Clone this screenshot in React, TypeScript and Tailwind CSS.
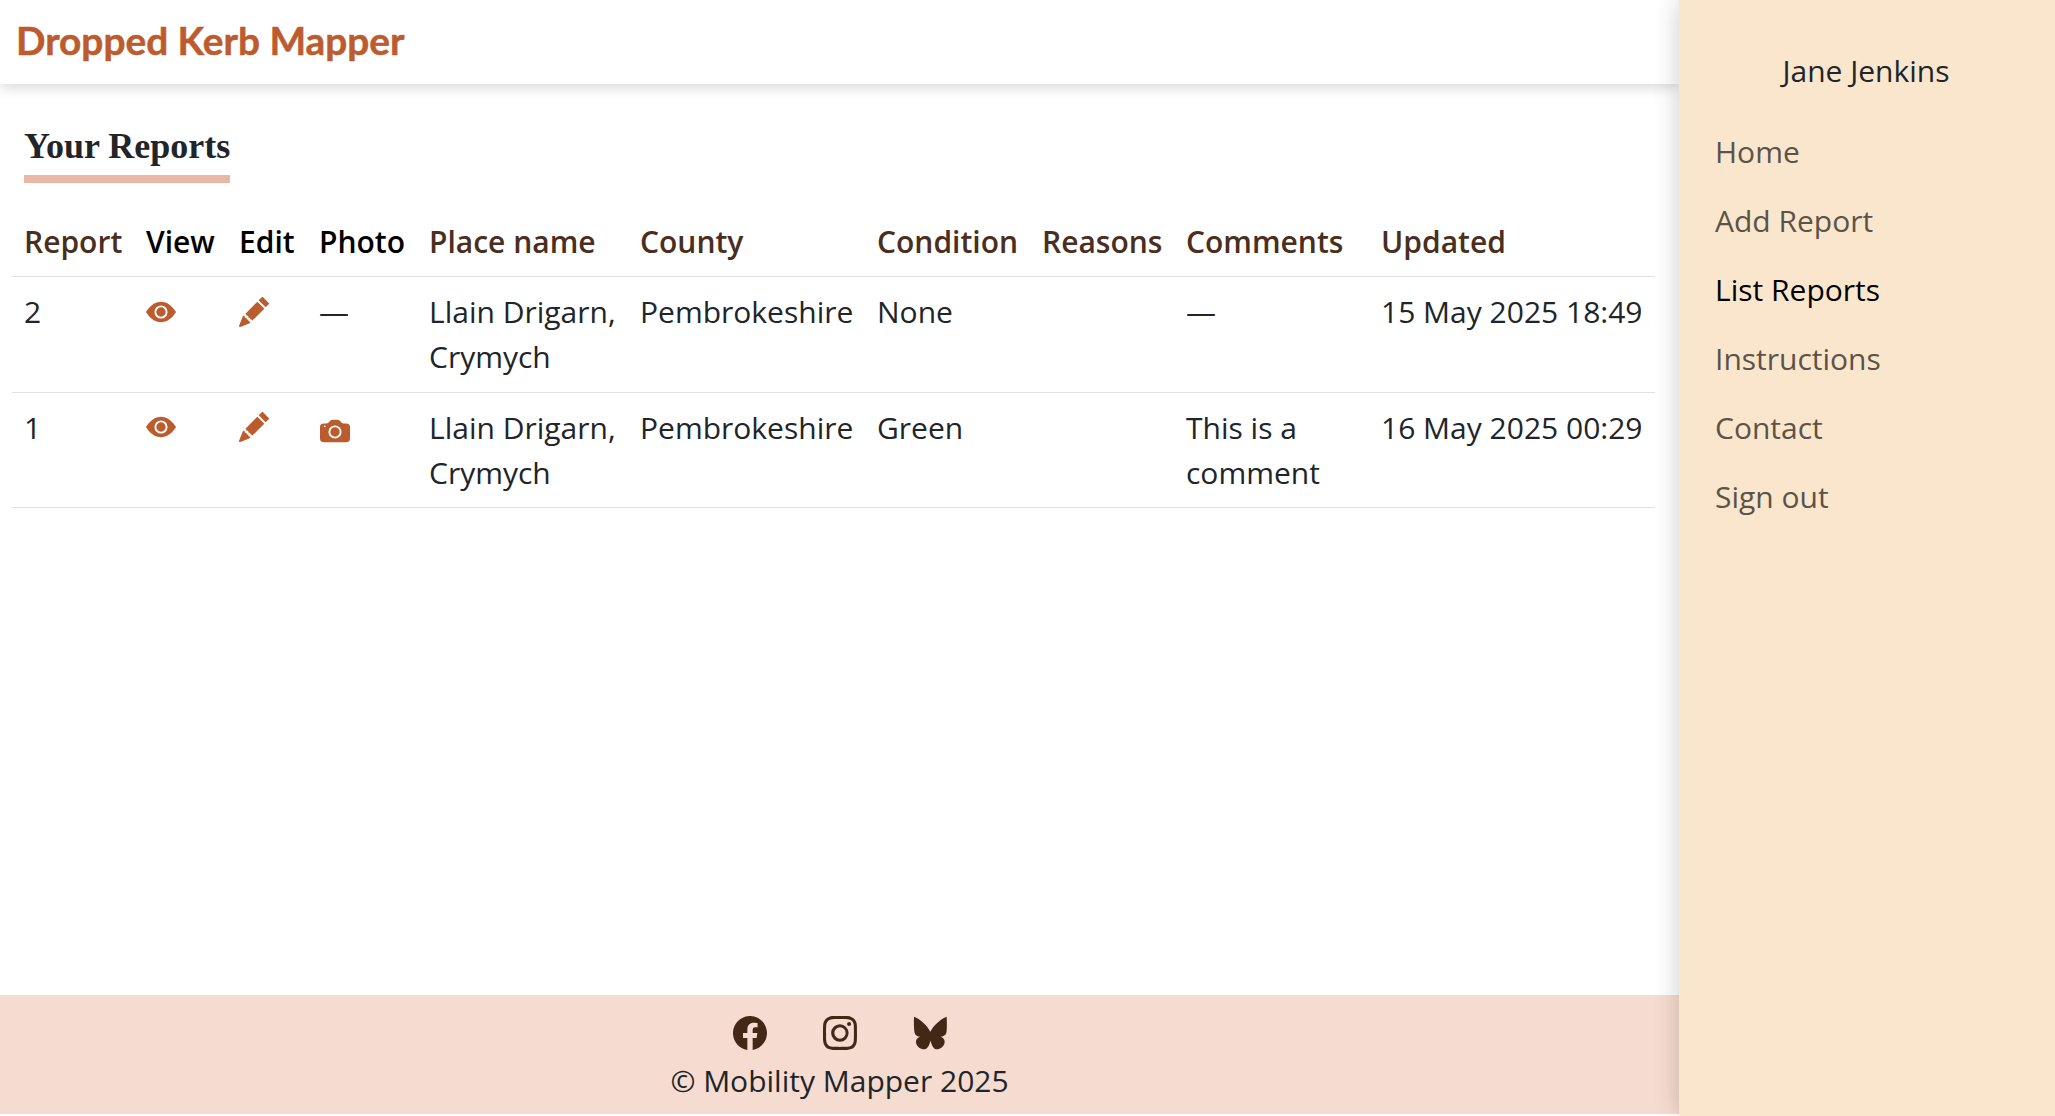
import { BsEyeFill, BsPencilFill, BsCameraFill, BsFacebook, BsInstagram } from "react-icons/bs";

const th = "px-3 pt-[13px] pb-[12px] text-left font-semibold text-[#4a2e20] border-b border-[#dee2e6] whitespace-nowrap";
const thb = "px-3 pt-[13px] pb-[12px] text-left font-semibold text-black border-b border-[#dee2e6] whitespace-nowrap";
const td = "px-3 pt-[12px] pb-[13px] align-top border-b border-[#dee2e6] text-[#212529]";
const td2 = "px-3 pt-[12px] pb-[12px] align-top border-b border-[#dee2e6] text-[#212529]";

function Eye({ top }: { top: string }) {
  return <BsEyeFill className={"text-[#bc5c2e] w-[30px] h-[30px] " + top} />;
}
function Pencil({ top }: { top: string }) {
  return <BsPencilFill className={"text-[#bc5c2e] w-[30px] h-[30px] " + top} />;
}
function Butterfly() {
  return (
    <svg viewBox="0 0 100 100" className="w-[34px] h-[34px]" fill="currentColor">
      <path d="M3 2C20 8 42 28 51 46C60 28 82 8 99 2C100 20 100 40 98 50C95 58 88 60 81 61C90 64 96 72 92 82C88 92 78 98 69 98C62 98 55 88 51.5 72C48 88 41 98 33 98C24 98 14 92 10 82C6 72 12 64 21 61C14 60 7 58 5 50C3 40 2 20 3 2Z" />
    </svg>
  );
}

export default function App() {
  return (
    <div className="flex h-[1116px] overflow-hidden bg-white font-['Open_Sans',sans-serif] text-[30px] leading-[45px]">
      <div className="flex flex-col w-[1679px] shrink-0">
        <header className="h-[84px] shrink-0 flex items-center px-4 pb-[3px] shadow-[0_4px_12px_rgba(0,0,0,0.15)]">
          <span className="font-['Lato',sans-serif] font-bold text-[38.8px] leading-none text-[#bc5c2e] [-webkit-text-stroke:0.5px_#bc5c2e]">Dropped Kerb Mapper</span>
        </header>
        <main className="flex-1 px-3 pt-[39px]">
          <h2 className="inline-block ml-3 pb-[6px] border-b-[8px] border-[#e9b8a4] font-['Liberation_Serif',serif] font-bold text-[36px] leading-[46px] text-[#212529]">Your Reports</h2>
          <table className="w-[1643px] table-fixed border-collapse mt-[23px]">
            <thead>
              <tr>
                <th className={th + " w-[122px]"}>Report</th>
                <th className={thb + " w-[93px]"}>View</th>
                <th className={thb + " w-[80px]"}>Edit</th>
                <th className={thb + " w-[110px]"}>Photo</th>
                <th className={th + " w-[211px]"}>Place name</th>
                <th className={th + " w-[237px]"}>County</th>
                <th className={th + " w-[165px]"}>Condition</th>
                <th className={th + " w-[144px]"}>Reasons</th>
                <th className={th + " w-[195px]"}>Comments</th>
                <th className={th + " w-[286px]"}>Updated</th>
              </tr>
            </thead>
            <tbody>
              <tr>
                <td className={td}>2</td>
                <td className={td}><Eye top="mt-[8px]" /></td>
                <td className={td}><Pencil top="mt-[8px]" /></td>
                <td className={td}>—</td>
                <td className={td}>Llain Drigarn, Crymych</td>
                <td className={td}>Pembrokeshire</td>
                <td className={td}>None</td>
                <td className={td}></td>
                <td className={td}>—</td>
                <td className={td + " whitespace-nowrap"}>15 May 2025 18:49</td>
              </tr>
              <tr>
                <td className={td2}>1</td>
                <td className={td2}><Eye top="mt-[7px]" /></td>
                <td className={td2}><Pencil top="mt-[7px]" /></td>
                <td className={td2}><BsCameraFill className="text-[#bc5c2e] w-[30px] h-[30px] mt-[11px] ml-[1px]" /></td>
                <td className={td2}>Llain Drigarn, Crymych</td>
                <td className={td2}>Pembrokeshire</td>
                <td className={td2}>Green</td>
                <td className={td2}></td>
                <td className={td2}>This is a comment</td>
                <td className={td2 + " whitespace-nowrap"}>16 May 2025 00:29</td>
              </tr>
            </tbody>
          </table>
        </main>
        <footer className="h-[119px] mb-[2px] shrink-0 bg-[#f6dcd0] flex flex-col items-center pt-[21px] text-[#212529]">
          <div className="flex gap-[56px] text-[#432818]">
            <BsFacebook className="w-[34px] h-[34px]" />
            <BsInstagram className="w-[34px] h-[34px]" />
            <Butterfly />
          </div>
          <div className="mt-[8px]">© Mobility Mapper 2025</div>
        </footer>
      </div>
      <aside className="flex-1 bg-[#fae6cd] shadow-[0_0_24px_rgba(0,0,0,0.2)] z-10 px-9 pt-[48px]">
        <div className="text-center text-[#212529] pr-[2px]">Jane Jenkins</div>
        <nav className="flex flex-col mt-[36px] gap-[24px] text-[#5c5348]">
          <a>Home</a>
          <a>Add Report</a>
          <a className="text-black">List Reports</a>
          <a>Instructions</a>
          <a>Contact</a>
          <a>Sign out</a>
        </nav>
      </aside>
    </div>
  );
}
